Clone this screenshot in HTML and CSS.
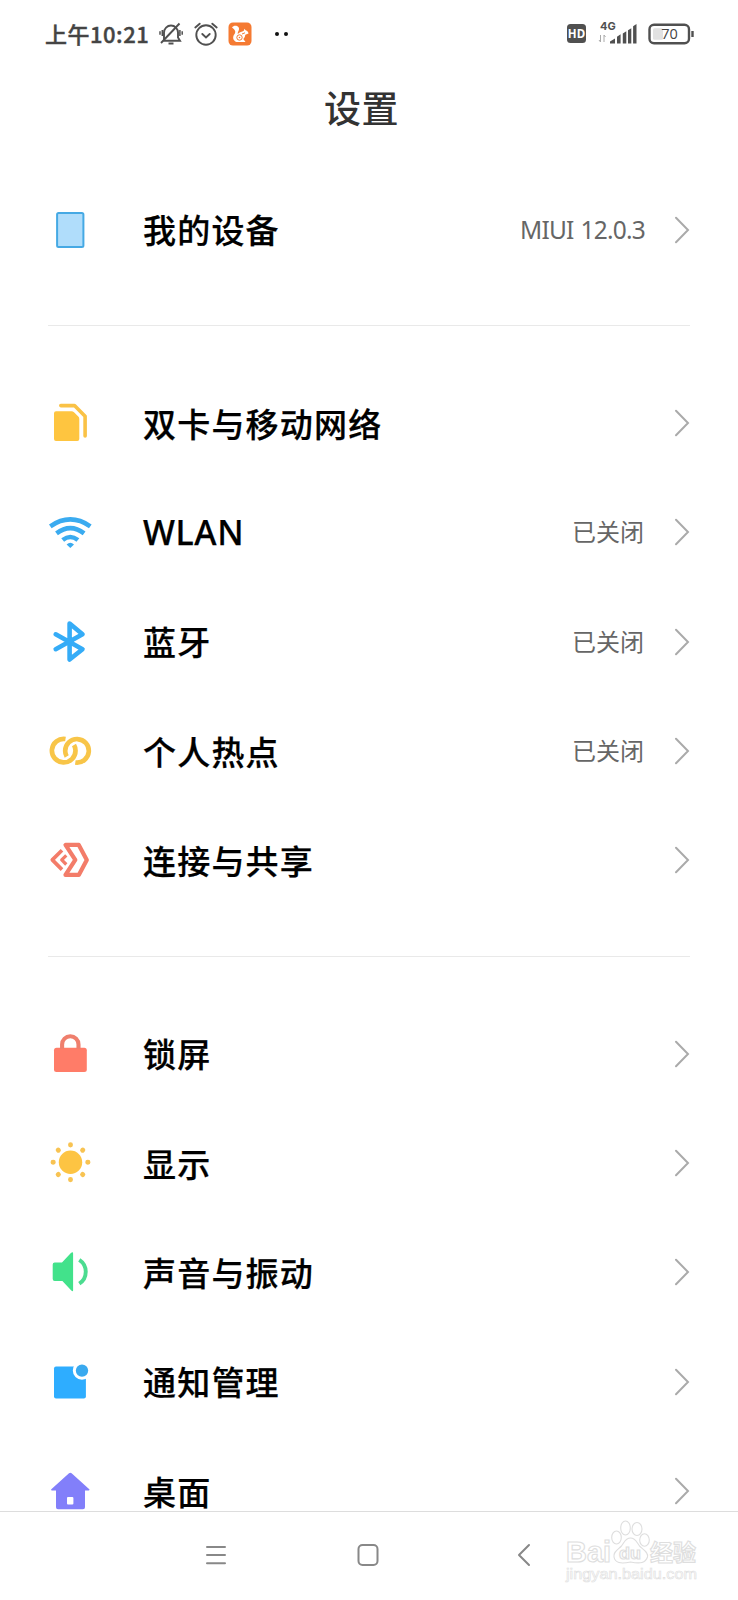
FILE: index.html
```html
<!DOCTYPE html>
<html lang="zh-CN">
<head>
<meta charset="utf-8">
<title>设置</title>
<link rel="stylesheet" href="styles.css">
</head>
<body>
<div class="screen">
  <header class="status">
    <span class="time">上午10:21</span>
    <svg class="bell" width="24" height="24" viewBox="0 0 24 24" fill="none" stroke="#505050" stroke-width="1.900">
      <path d="M5 18V10.500a7 7 0 0 1 14 0v5l2 3.200H4.500"/><path d="M9.500 21.500h5" stroke-width="2"/><path d="M2 21 20.500 1.500"/><path d="M3.300 8v6M1 9.300v3.400M20.900 8v6M23.200 9.300v3.400" stroke-width="1.500"/>
    </svg>
    <svg class="alarm" width="26" height="26" viewBox="0 0 26 26" fill="none" stroke="#505050" stroke-width="1.900" stroke-linecap="round">
      <circle cx="13" cy="14" r="9.700"/><path d="m9.300 13 3.700 3.400 3.700-3.400M2.300 6.500 6.700 2.700M23.700 6.500 19.300 2.700"/>
    </svg>
    <svg class="browser" width="24" height="24" viewBox="0 0 24 24">
      <rect x=".5" y=".5" width="23" height="23" rx="4.500" fill="#f57a32"/>
      <path d="M4 5.500C5.500 3 9.500 3 10.700 5.500c1.300 2.700-1.600 4.500-.8 6.500 1.600-2.200 4-2.200 5.900-3.300l.6-2 1.200 1.600c1.700.4 2.800 1.700 2.900 3.200l-3.200 1.300c-.2 2.300-1 3.200-2 4.300l2.200 2.900H8.500C5 18.800 4.200 15 6.400 12.300 8 10 7.500 8 4 5.500Z" fill="#fff"/>
      <circle cx="11.500" cy="15.500" r="2.700" fill="none" stroke="#f57a32"/><circle cx="11.500" cy="15.500" r=".8" fill="#f57a32"/><path d="m14 12 3-1.200" stroke="#f57a32"/>
    </svg>
    <span class="more"><i></i><i></i></span>
    <span class="hd">HD</span>
    <svg class="signal" width="40" height="24" viewBox="0 0 40 24" fill="#505050">
      <text x="2" y="8.200" class="net">4G</text>
      <path d="M2.500 13v7M1 18l1.500 2M6 20v-7l1.500 2" fill="none" stroke="#aaa"/>
      <path d="M12 21.500v-2l5-3v5zM19 14.700l3.600-2.400v9.200H19zM24.800 11.500l3.500-2.200v12.200H24.800zM30 8.200l3.300-2v15.300H30zM35.100 4.200l3.400-2.200v19.500h-3.400z"/>
    </svg>
    <svg class="battery" width="47" height="22" viewBox="0 0 47 22">
      <rect x="1.500" y="1.700" width="39.500" height="18.500" rx="4.500" fill="#fff" stroke="#505050" stroke-width="2.400"/>
      <rect x="5" y="5.200" width="10" height="11.500" rx="1.500" fill="#e2e2e2"/><path d="M44.500 8v6" stroke="#505050" stroke-width="2.400"/>
      <text x="21.500" y="16.200" text-anchor="middle" class="pct">70</text>
    </svg>
  </header>
  <h1 class="title">设置</h1>
  <main class="list">
    <section class="group">
      <div class="row">
        <svg class="icon" viewBox="0 0 48 48"><rect x="11.100" y="7.100" width="26.300" height="33.800" rx="1.500" fill="#b0ddfb" stroke="#45a9e4" stroke-width="2"/></svg>
        <span class="label">我的设备</span><span class="value latin">MIUI 12.0.3</span>
        <svg class="chev" viewBox="0 0 14 28"><path d="M1 1.700 13 14 1 26.300"/></svg>
      </div>
    </section>
    <section class="group">
      <div class="row">
        <svg class="icon" viewBox="0 0 48 48"><path d="M10 12.300H25.500q1.500 0 2.500 1l4.300 4.300q1 1 1 2.400V40q0 2-2 2H10q-2 0-2-2V14.300q0-2 2-2Z" fill="#fec540"/><path d="M14.800 6.600H28.500L39.100 17.200V37" fill="none" stroke="#fac246" stroke-width="3.600" stroke-linecap="round" stroke-linejoin="round"/></svg>
        <span class="label">双卡与移动网络</span>
        <svg class="chev" viewBox="0 0 14 28"><path d="M1 1.700 13 14 1 26.300"/></svg>
      </div>
      <div class="row">
        <svg class="icon" viewBox="0 0 48 48" fill="none" stroke="#3aabf0" stroke-width="4.600"><path d="M4.300 18.300Q24.300 4.500 44.300 18.300M10.500 25.300Q24.300 14.800 38.100 25.300M16.700 32Q24.300 26 31.900 32"/><path d="m24.300 40-3.700-3.500q3.700-3.600 7.400 0Z" fill="#3aabf0" stroke="none"/></svg>
        <span class="label wlan">WLAN</span><span class="value">已关闭</span>
        <svg class="chev" viewBox="0 0 14 28"><path d="M1 1.700 13 14 1 26.300"/></svg>
      </div>
      <div class="row">
        <svg class="icon" viewBox="0 0 48 48" fill="none" stroke="#35acf7" stroke-width="4.600" stroke-linecap="round" stroke-linejoin="round"><path d="M9.700 16.300 36.500 31.200 23.600 41.500V5.500L36.500 16.300 9.700 31.200"/></svg>
        <span class="label">蓝牙</span><span class="value">已关闭</span>
        <svg class="chev" viewBox="0 0 14 28"><path d="M1 1.700 13 14 1 26.300"/></svg>
      </div>
      <div class="row">
        <svg class="icon" viewBox="0 0 48 48" fill="none" stroke="#f8c548" stroke-width="4.700"><path d="M19.500 12A11.800 11.800 0 1 0 29.500 23.500Q29.500 20.500 28 18"/><path d="M29.300 35.500A11.800 11.800 0 1 0 19.200 24Q19.200 27 20.700 29.500"/></svg>
        <span class="label">个人热点</span><span class="value">已关闭</span>
        <svg class="chev" viewBox="0 0 14 28"><path d="M1 1.700 13 14 1 26.300"/></svg>
      </div>
      <div class="row">
        <svg class="icon" viewBox="0 0 48 48" fill="none" stroke="#f37c69" stroke-width="4.200" stroke-linejoin="round"><path d="M19.500 8.900H32.800L40.800 23.900 32.800 38.900H19.500L29.300 23.900Z"/><path d="M16 14.200 6.300 23.900 16 33.600" stroke-width="3.700"/><path d="M20.300 19.300 15.700 23.900l4.600 4.600" stroke-width="3.200"/></svg>
        <span class="label">连接与共享</span>
        <svg class="chev" viewBox="0 0 14 28"><path d="M1 1.700 13 14 1 26.300"/></svg>
      </div>
    </section>
    <section class="group">
      <div class="row">
        <svg class="icon" viewBox="0 0 48 48"><rect x="8" y="17.800" width="32.800" height="24.300" rx="2.500" fill="#ff7c68"/><path d="M16.100 19V14.400a8.200 8.200 0 0 1 16.400 0V19" fill="none" stroke="#ef7f6d" stroke-width="4.100"/></svg>
        <span class="label">锁屏</span>
        <svg class="chev" viewBox="0 0 14 28"><path d="M1 1.700 13 14 1 26.300"/></svg>
      </div>
      <div class="row">
        <svg class="icon" viewBox="0 0 48 48" fill="#fdc443"><circle cx="24.500" cy="23.300" r="11.700"/><path d="M24.500 5.800v.3M24.500 40.500v.3M7 23.300h.3M41.700 23.300h.3M12.200 11l.2.200M36.600 35.400l.2.200M12.200 35.600l.2-.2M36.600 11.200l.2-.2" fill="none" stroke="#f8c352" stroke-width="4.900" stroke-linecap="round"/></svg>
        <span class="label">显示</span>
        <svg class="chev" viewBox="0 0 14 28"><path d="M1 1.700 13 14 1 26.300"/></svg>
      </div>
      <div class="row">
        <svg class="icon" viewBox="0 0 48 48"><path d="M8.700 14.400H16L24.900 5q2.200-1.800 2.200.5v36.800q0 1.500-1.800.3L16.400 33H8.700q-2 0-2-2V16.400q0-2 2-2Z" fill="#42e28b"/><path d="M33.300 11.800C41.900 17.500 41.900 30 33.300 35.700" fill="none" stroke="#4cdc90" stroke-width="3.900"/></svg>
        <span class="label">声音与振动</span>
        <svg class="chev" viewBox="0 0 14 28"><path d="M1 1.700 13 14 1 26.300"/></svg>
      </div>
      <div class="row">
        <svg class="icon" viewBox="0 0 48 48"><rect x="8" y="8.600" width="31.900" height="31.800" rx="2" fill="#2eadff"/><circle cx="36" cy="12.600" r="7.700" fill="#39a9ef" stroke="#fff" stroke-width="3"/></svg>
        <span class="label">通知管理</span>
        <svg class="chev" viewBox="0 0 14 28"><path d="M1 1.700 13 14 1 26.300"/></svg>
      </div>
      <div class="row">
        <svg class="icon" viewBox="0 0 48 48"><path d="M23 6.300q1.300-1.200 2.600 0L43.300 22.300q.8 1-.5 1.100H39V40.200q0 2-2 2H12q-2 0-2-2V23.400H5.800q-1.300-.1-.5-1.100Z" fill="#827ffa"/><rect x="21" y="29.900" width="6.400" height="7.700" rx="1" fill="#fff"/></svg>
        <span class="label">桌面</span>
        <svg class="chev" viewBox="0 0 14 28"><path d="M1 1.700 13 14 1 26.300"/></svg>
      </div>
    </section>
  </main>
  <nav class="nav">
    <svg width="22" height="24" viewBox="0 0 22 24"><path d="M2 4h18M2 12h18M2 20.200h18"/></svg>
    <svg width="24" height="24" viewBox="0 0 24 24"><rect x="2.500" y="2" width="19" height="20" rx="4"/></svg>
    <svg width="14" height="24" viewBox="0 0 14 24"><path d="M12 2 2 12l10 10"/></svg>
    <div class="mark">
      <svg width="136" height="66" viewBox="0 0 136 66" fill="#fff" stroke="#dedede" stroke-width="1.100">
        <text x="2" y="41.500" class="m-big" textLength="45" lengthAdjust="spacingAndGlyphs">Bai</text>
        <ellipse cx="52.500" cy="17.500" rx="4.800" ry="6.500"/><ellipse cx="61.500" cy="8" rx="4.800" ry="7"/><ellipse cx="73" cy="9" rx="5" ry="6.500"/><ellipse cx="80.500" cy="20" rx="4.800" ry="6.300"/>
        <path d="M66.500 18c-5 0-6 4-9 8-4 4-8.500 6-7.500 11 1 6 6.500 7 16.500 5 10 2 15 1 17-5 1-5-4-7-8-11-3-4-4-8-9-8Z"/>
        <text x="55" y="38.500" class="m-du" textLength="22" lengthAdjust="spacingAndGlyphs">du</text>
        <text x="86" y="40.500" class="m-cn" textLength="46">经验</text>
        <text x="2" y="59" class="m-url" textLength="131" lengthAdjust="spacingAndGlyphs">jingyan.baidu.com</text>
      </svg>
    </div>
  </nav>
</div>
</body>
</html>
```
FILE: styles.css
```css
* { box-sizing: border-box; }
body { margin: 0; background: #fff; font-family: "Noto Sans CJK SC", sans-serif; }
.screen { width: 738px; height: 1600px; display: flex; flex-direction: column; overflow: hidden; }
svg { display: block; flex: none; overflow: visible; }

.status { flex: none; height: 68px; padding-left: 45px; display: flex; align-items: center; color: #444; }
.time { width: 103px; padding-bottom: 3px; font-size: 22px; font-weight: 500; line-height: 30px; letter-spacing: .5px; white-space: nowrap; -webkit-text-stroke: .4px #444; }
.bell { margin-left: 11px; }
.alarm { margin-left: 10px; }
.browser { margin-left: 9px; }
.more { display: flex; gap: 5px; margin-left: 23px; }
.more i { width: 4px; height: 4px; border-radius: 50%; background: #111; }
.hd { width: 19px; height: 19px; margin: 0 0 2px 279px; border-radius: 3.5px; background: #505050; color: #fff; font: bold 11.5px/19px "Open Sans", sans-serif; text-align: center; }
.signal { margin-left: 12px; }
.net { font: bold 11px Inter, sans-serif; }
.battery { margin: 0 0 1px 10px; }
.pct { font: 500 14.5px "Open Sans", sans-serif; fill: #444; }

.title { flex: none; height: 107px; margin: 0; padding: 12px 15px 0 0; text-align: center; font-size: 37px; line-height: 54px; font-weight: 500; letter-spacing: .5px; color: #333; }

.list { flex: 1; min-height: 0; overflow: hidden; padding: 0 48px; }
.group + .group { margin-top: 41px; padding-top: 42px; border-top: 1px solid #e9e9e9; }
.row { height: 109.35px; display: flex; align-items: center; }
.icon { width: 48px; height: 48px; margin-left: -2px; }
.label { flex: 1; margin-left: 49px; padding-bottom: 1px; font-size: 33px; font-weight: 500; line-height: 46px; letter-spacing: 1.2px; color: #000; -webkit-text-stroke: .25px #000; }
.wlan { padding-bottom: 0; font-family: "Noto Sans", sans-serif; font-size: 34px; letter-spacing: .6px; }
.value { margin-right: 31px; padding-bottom: 2px; font-size: 24px; font-weight: 400; line-height: 36px; color: #666; }
.latin { padding-bottom: 0; margin-right: 30px; font-family: "Noto Sans", sans-serif; font-size: 24.5px; letter-spacing: -.8px; word-spacing: 1.5px; }
.chev { width: 14px; height: 28px; margin-right: 1px; fill: none; stroke: #aaa; stroke-width: 2; stroke-linecap: round; }

.nav { flex: none; position: relative; height: 89px; border-top: 1px solid #ddd; padding: 31px 0 0 205px; display: flex; align-items: flex-start; background: #fff; }
.nav > svg { fill: none; stroke: #888; stroke-width: 2; stroke-linecap: round; stroke-linejoin: round; }
.nav > svg + svg { margin-left: 129px; }
.nav > svg + svg + svg { margin-left: 137px; }
.mark { position: absolute; left: 564px; top: 8px; }
.m-big { font: bold 29px "Liberation Sans", sans-serif; }
.m-du { font: bold 17px "Liberation Sans", sans-serif; }
.m-cn { font: 700 23px "Noto Sans CJK SC", sans-serif; }
.m-url { font: 15px "Liberation Sans", sans-serif; stroke-width: .6px; }
```
